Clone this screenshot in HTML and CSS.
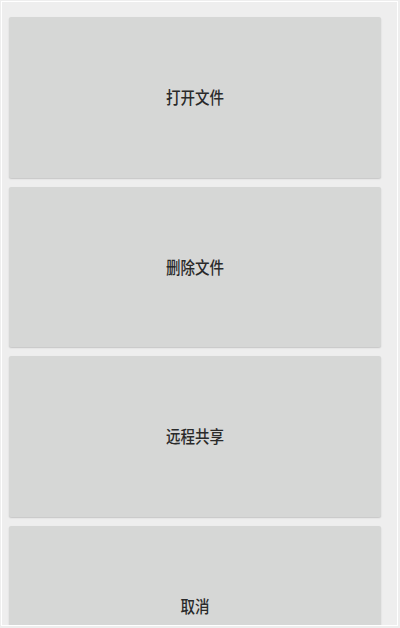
FILE: index.html
```html
<!DOCTYPE html>
<html lang="zh">
<head>
<meta charset="utf-8">
<link rel="stylesheet" href="styles.css">
</head>
<body>
<div class="frame">
  <div class="list">
    <button class="item"><span class="label">打开文件</span></button>
    <button class="item"><span class="label">删除文件</span></button>
    <button class="item"><span class="label">远程共享</span></button>
    <button class="item"><span class="label">取消</span></button>
  </div>
</div>
</body>
</html>
```
FILE: styles.css
```css
html, body {
  margin: 0;
  padding: 0;
  width: 400px;
  height: 628px;
  overflow: hidden;
  background: #eeeeee;
}
.frame {
  box-sizing: border-box;
  margin: 1px 0 0 1px;
  width: 397px;
  height: 625px;
  border: 1px solid #ffffff;
  background: #eeeeee;
  overflow: hidden;
}
.list {
  display: flex;
  flex-direction: column;
  gap: 9.2px;
  padding: 15px 0 0 7px;
}
.item {
  flex: none;
  width: 372px;
  height: 160.5px;
  margin: 0;
  padding: 0;
  border: none;
  border-radius: 2px;
  background: #d6d7d6;
  box-shadow: 0 1px 1.5px rgba(0, 0, 0, 0.18);
  display: flex;
  align-items: center;
  justify-content: center;
}
.label {
  display: inline-block;
  font-family: "Noto Sans CJK SC", "Noto Sans", sans-serif;
  font-size: 14.5px;
  font-weight: 500;
  line-height: 1;
  color: #2a2a2a;
  transform: scaleY(1.15);
}
```
